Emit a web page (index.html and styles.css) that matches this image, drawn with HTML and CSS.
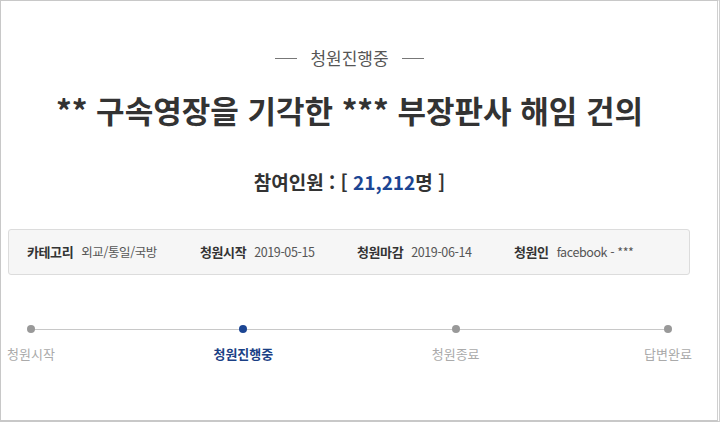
FILE: index.html
```html
<!DOCTYPE html>
<html lang="ko">
<head>
<meta charset="utf-8">
<link rel="stylesheet" href="styles.css">
</head>
<body>
<div class="frame">
  <div class="head">
    <div class="status"><span class="dash"></span><span class="status-text">청원진행중</span><span class="dash"></span></div>
    <h1 class="title">** 구속영장을 기각한 *** 부장판사 해임 건의</h1>
    <div class="count">참여인원 : [ <span class="num">21,212</span>명 ]</div>
  </div>
  <div class="info">
    <div class="item item-cat"><span class="lbl">카테고리</span><span class="val">외교/통일/국방</span></div>
    <div class="item item-start"><span class="lbl">청원시작</span><span class="val">2019-05-15</span></div>
    <div class="item item-end"><span class="lbl">청원마감</span><span class="val">2019-06-14</span></div>
    <div class="item"><span class="lbl">청원인</span><span class="val">facebook - ***</span></div>
  </div>
  <div class="progress">
    <div class="step"><span class="dot"></span><span class="step-lbl">청원시작</span></div>
    <div class="step active"><span class="dot"></span><span class="step-lbl">청원진행중</span></div>
    <div class="step"><span class="dot"></span><span class="step-lbl">청원종료</span></div>
    <div class="step"><span class="dot"></span><span class="step-lbl">답변완료</span></div>
  </div>
</div>
</body>
</html>
```
FILE: styles.css
```css
* { box-sizing: border-box; }
html, body { margin: 0; padding: 0; background: #fff; }
body { font-family: "Noto Sans CJK KR", "Noto Sans", sans-serif; color: #333; }
.frame {
  width: 720px;
  height: 422px;
  border: 1px solid #c8c8c8;
  border-right: 3px double #d0d0d0;
  border-bottom: 2px solid #c8c8c8;
  padding-top: 46px;
  overflow: hidden;
}
.head { width: 697px; }
.status {
  display: flex;
  justify-content: center;
  align-items: center;
  gap: 13px;
  height: 22px;
}
.dash { width: 22px; height: 1px; background: #777; }
.status-text { font-size: 17px; color: #555; line-height: 22px; }
.title {
  margin: 20px 0 0;
  text-align: center;
  font-size: 31px;
  font-weight: 700;
  line-height: 42px;
  color: #333;
  letter-spacing: 0;
  white-space: nowrap;
}
.count {
  margin-top: 38px;
  text-align: center;
  font-size: 19px;
  font-weight: 700;
  line-height: 26px;
  color: #333;
}
.count .num { color: #1b4593; }
.info {
  margin: 34px 0 0 7px;
  width: 682px;
  height: 46px;
  background: #f6f6f6;
  border: 1px solid #dcdcdc;
  border-radius: 3px;
  display: flex;
  align-items: center;
  padding-left: 18px;
  font-size: 13px;
  line-height: 18px;
}
.item { display: flex; align-items: baseline; gap: 8px; letter-spacing: -0.4px; }
.item-cat { width: 173px; }
.item-start { width: 157px; }
.item-end { width: 157px; }
.lbl { font-weight: 700; color: #333; }
.val { color: #555; font-size: 12.5px; }
.progress {
  position: relative;
  margin-top: 50px;
  width: 697px;
  display: flex;
  justify-content: space-between;
}
.progress::before {
  content: "";
  position: absolute;
  left: 30px;
  right: 30px;
  top: 4px;
  height: 1px;
  background: #c8c8c8;
}
.step {
  width: 60px;
  display: flex;
  flex-direction: column;
  align-items: center;
  position: relative;
}
.dot { width: 8px; height: 8px; border-radius: 50%; background: #999; }
.step-lbl { margin-top: 12px; font-size: 13px; line-height: 18px; color: #aaa; white-space: nowrap; }
.step.active .dot { background: #1b4593; }
.step.active .step-lbl { color: #1b3f85; font-weight: 700; }
```
